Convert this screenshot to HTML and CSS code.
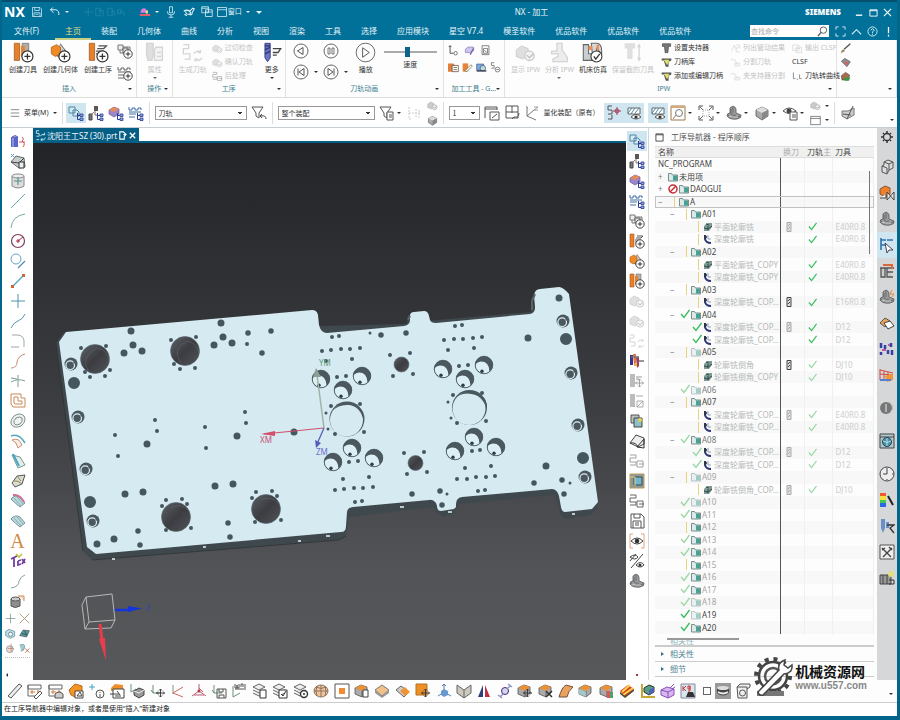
FILE: index.html
```html
<!DOCTYPE html>
<html lang="zh-CN">
<head>
<meta charset="utf-8">
<title>NX - 加工</title>
<link rel="stylesheet" href="styles.css">
</head>
<body>
<svg class="defs" aria-hidden="true">
<defs>
<symbol id="plus" viewBox="0 0 16 16"><circle cx="11" cy="11" r="4.2" fill="#fff" stroke="#333" stroke-width=".9"/><path d="M8.7 11h4.6M11 8.7v4.6" stroke="#333"/></symbol>
<symbol id="tb" viewBox="0 0 16 16"><path d="M9.5 8v6.5h2.5M9.5 10.500h2.500" stroke="#2a3c96"/><path d="M12 9h3v2.500h-3zM12 13h3v2.500h-3z" fill="#8fa2dc" stroke="#2a3c96" stroke-width=".8"/></symbol>
<symbol id="v1" viewBox="0 0 16 16"><path d="M1 2h6v6H1zM5 5h4l2 2v4H5z" fill="#d5e9f2" stroke="#4d86a3"/><use href="#tb"/></symbol>
<symbol id="v2" viewBox="0 0 16 16"><path d="M6 1h4v5H6z" fill="#5f5550"/><path d="M7 6v4h3" stroke="#8a6b5c"/><path d="M1 9h3v6H1z" fill="#777" stroke="#444"/><path d="M6 7l-3 3" stroke="#777"/><use href="#tb"/></symbol>
<symbol id="v3" viewBox="0 0 16 16"><path d="M1 5l5-3 5 2v5L6 12 1 9z" fill="#9a86c8" stroke="#6a5aa0" stroke-width=".7"/><path d="M1 5l5 2 5-3-5-2z" fill="#e88b5a"/><use href="#tb"/></symbol>
<symbol id="v4" viewBox="0 0 16 16"><path d="M1 2v3h3V3h3v2h3V3h3v2M1 9h7M1 12h6M1 7h12" stroke="#3f6fa6"/><use href="#tb"/></symbol>
<symbol id="c1" viewBox="0 0 16 16"><path d="M1 1h4v13H1z" fill="#e8802a" stroke="#a65b1e" stroke-width=".6"/><path d="M7 1h5v7H9l-2 3z" fill="#b5aca5" stroke="#777" stroke-width=".6"/><path d="M6 3h3v8H6z" fill="#e08538"/><use href="#plus"/></symbol>
<symbol id="c2" viewBox="0 0 16 16"><path d="M8 1l6 8-4 5-6-4z" fill="#777"/><path d="M8 2l3 4-3 5-3-2z" fill="#ccc"/><path d="M1 4l4-2 3 2v5L4 11 1 9z" fill="#f08a24" stroke="#b5611a" stroke-width=".6"/><use href="#plus"/></symbol>
<symbol id="c3" viewBox="0 0 16 16"><path d="M1 1h4v13H1z" fill="#e8802a" stroke="#a65b1e" stroke-width=".6"/><path d="M8 3h6l-2 2H7M6 7h6M6 9h3" stroke="#555"/><use href="#plus"/></symbol>
<symbol id="c4" viewBox="0 0 16 16"><path d="M1 2h5v5H1zM3 7v3h3M6 4h7v3" stroke="#777" fill="#eee"/><path d="M6 5h5v5H6z" fill="#ddd" stroke="#666"/><use href="#plus"/></symbol>
<symbol id="c5" viewBox="0 0 16 16"><path d="M1 2v3h3V3h3v2h3V3h3v2M1 7h13M1 10h6M1 13h6" stroke="#666"/><use href="#plus"/></symbol>
<symbol id="gtool" viewBox="0 0 16 16"><path d="M2 1h5v9l-1 4H3l-1-4z" fill="#ccc" stroke="#bbb"/><path d="M9 4h5v10H8V6zM10 8h3M10 11h3" stroke="#bbb" fill="#eee"/></symbol>
<symbol id="gstep" viewBox="0 0 16 16"><path d="M1 2h4v3H1v4h5v4H2M9 9a3 3 0 0 1 5-1M15 12a3 3 0 0 1-5 1M14 6v2h-2M10 15v-2h2" stroke="#bbb"/></symbol>
<symbol id="gcube" viewBox="0 0 16 16"><path d="M1 6l4-3 5 2v5l-4 3-5-2z" fill="#ccc" stroke="#aaa" stroke-width=".7"/><circle cx="11" cy="10.500" r="3.600" fill="#eee" stroke="#aaa"/><path d="M9 10l2 2 3-3" stroke="#999"/></symbol>
<symbol id="more" viewBox="0 0 16 16"><path d="M3 1h4v11l-2 3-2-3z" fill="#6d75c9" stroke="#333a80" stroke-width=".7"/><path d="M3 3h4M3 6l4-2M3 9l4-2" stroke="#2c3372"/><path d="M9 5h6l-2 3H9M9 10h3" stroke="#444"/></symbol>
<symbol id="eye" viewBox="0 0 16 16"><path d="M2 8q6-6 12 0-6 6-12 0z" fill="#fff" stroke="#444"/><circle cx="8" cy="8" r="2.300" fill="#333"/></symbol>
<symbol id="hatcheye" viewBox="0 0 16 16"><path d="M2 3h12v6H2z" fill="#fff" stroke="#666"/><path d="M2 8l4-5M5 9l4-6M9 8l4-5" stroke="#4f89a0"/><path d="M5 12q5-5 10 0-5 4-10 0z" fill="#fff" stroke="#333" stroke-width=".8"/><circle cx="10" cy="12" r="1.600" fill="#333"/></symbol>
<symbol id="cube" viewBox="0 0 16 16"><path d="M2 5l6-3 6 3v6l-6 4-6-4z" fill="#aaa" stroke="#555" stroke-width=".8"/><path d="M2 5l6 3 6-3-6-3z" fill="#ddd"/><path d="M8 8v7l6-4V5z" fill="#888"/></symbol>
<symbol id="ocube" viewBox="0 0 16 16"><path d="M1 5l6-3 6 2v6l-5 4-7-3z" fill="#aaa" stroke="#555" stroke-width=".8"/><path d="M1 5l7 3 5-4-6-2z" fill="#ed9135"/><path d="M8 8v6" stroke="#666"/></symbol>
<symbol id="bracket" viewBox="0 0 16 16"><path d="M4 3q4-4 6 1v4l5 2q1 3-4 4-7 1-10-3 0-3 3-3z" fill="#9b9d9e" stroke="#555" stroke-width=".8"/><path d="M2 10q5 4 12 1M5 4v5q2 2 5 1M7 2v6" stroke="#555" stroke-width=".7"/><path d="M3 11q4 2 9 1" stroke="#e5e5e5" stroke-width=".8"/></symbol>
<symbol id="funnel" viewBox="0 0 16 16"><path d="M1 2h11L8 8v5l-3-2V8z" stroke="#555" fill="#fff"/></symbol>
<symbol id="layers" viewBox="0 0 16 16"><path d="M1 4l6-3 6 3-6 3zM1 7l6 3 6-3M1 10l6 3 6-3" fill="#eee" stroke="#555" stroke-width=".9"/></symbol>
<symbol id="axis" viewBox="0 0 16 16"><path d="M3 2v8h8M3 10L1 7" stroke="#6a917a"/></symbol>
<symbol id="cross" viewBox="0 0 16 16"><path d="M10.500 6v8M6.500 10h8M9 7.500L10.500 6 12 7.500M9 12.500l1.500 1.500 1.500-1.500M8 8.500L6.500 10 8 11.500M13 8.500l1.500 1.500-1.500 1.500" stroke="#333" stroke-width=".9"/></symbol>
<symbol id="loop" viewBox="0 0 16 16"><path d="M1 2h6v3H1v4h6v3H1M8 8h6v6H8V8M10 11h5" stroke="#666"/></symbol>
<symbol id="sheet" viewBox="0 0 16 16"><path d="M1 6q4-5 9-2l5 6-5 4q-5-4-9-8z" fill="#b7dade" stroke="#71898c" stroke-width=".9"/><path d="M4 5l7 8M7 4l6 7" stroke="#7b989b" stroke-width=".7"/></symbol>
<symbol id="plate" viewBox="0 0 16 16"><path d="M1 7l7-5 7 5-7 6z" fill="#f3c08a" stroke="#777"/><path d="M1 7v3l7 5 7-5V7l-7 6z" fill="#999"/></symbol>
<symbol id="calc" viewBox="0 0 16 16"><path d="M1 2h13v4H1zM1 2v11h7" stroke="#666" fill="#fff"/><path d="M3 9h5M10 9h3M5 7v4M11 7v4" stroke="#d77a3c"/></symbol>
<symbol id="fold" viewBox="0 0 10 10"><path d="M.5 1.500h3l1 1.500h5v6h-9z" fill="#dceae8" stroke="#6a8483" stroke-width=".9"/><path d="M5 3.500h4v5H5z" fill="#49a093"/></symbol>
<symbol id="mill" viewBox="0 0 10 10"><path d="M1 4l3-3h5v4L6 9H1z" fill="#7d9b95"/><path d="M1 6l4 1 4-3M3 2l3 1M5 4v4" stroke="#36494a"/></symbol>
<symbol id="depth" viewBox="0 0 10 10"><path d="M2 1v4q1 4 6 4" stroke="#2c3677" stroke-width="2"/><path d="M5 1v4h3" stroke="#8aa0bd"/><circle cx="2.500" cy="3" r="1.500" fill="#333"/></symbol>
<symbol id="ok" viewBox="0 0 10 10"><path d="M1 5l3 3.500L9.500 1" stroke="currentColor" stroke-width="1.300"/></symbol>
<symbol id="mag" viewBox="0 0 6 10"><path d="M1 .5h4v9H1z" fill="#ddd" stroke="currentColor"/><path d="M2 4l2-2M2 7l2-2" stroke="currentColor"/></symbol>
</defs>
</svg>

<header class="top">
  <div class="title">
    <b class="nx">NX</b>
    <button aria-label="保存"><svg viewBox="0 0 16 16"><path d="M2 2h10l2 2v10H2zM5 2v4h6V2M4 14V9h8v5M6 11h4" stroke="#d8edf4"/></svg></button>
    <button aria-label="撤销"><svg viewBox="0 0 16 16"><path d="M5 2L2 5l4 4M2 5h7q5 1 4 7" stroke="#e8f5f9" stroke-width="1.300"/></svg></button><i class="dd"></i>
    <span class="ghost"><svg viewBox="0 0 58 16"><path d="M2 8h12M8 2v12M18 3h6v10h-6zM22 6h6v8M34 3h6v10h-6zM38 7h5v6M47 5h5v5h-5zM50 8h6v6" stroke="#2588aa"/></svg></span>
    <button aria-label="颜色"><svg viewBox="0 0 16 16"><path d="M2 9q0-6 5-6 3 0 4 6z" fill="#d87ce0"/><path d="M9 6h3v4H9z" fill="#eadf8c"/><path d="M1 12h14" stroke="#f15d68" stroke-width="2.500"/></svg></button><i class="dd"></i>
    <button aria-label="语音"><svg viewBox="0 0 16 16"><path d="M6 1h4v8H6zM3 7q0 5 5 5t5-5M8 12v3M5 15h6" stroke="#e8f5f9"/></svg></button>
    <button aria-label="触控"><svg viewBox="0 0 16 16"><path d="M1 7q4-3 8 0 3 4-2 4-4 0-3-4M8 8l5-5 2 1-3 5q1 3-3 3M2 11l3 2" stroke="#e8f5f9" stroke-width="1.400"/></svg></button>
    <button aria-label="切换窗口"><svg viewBox="0 0 16 16"><path d="M1 1h9v8H1zM6 5h9v9H6zM1 3h9M6 8h9" stroke="#e8f5f9"/></svg></button>
    <button class="win"><svg viewBox="0 0 16 16"><path d="M2 2h12v12H2zM2 5h12" stroke="#e8f5f9"/></svg>窗口</button><i class="dd"></i><i class="dd wide"></i>
    <h1>NX - 加工</h1>
    <b class="siemens">SIEMENS</b>
    <div class="wctl"><button aria-label="最小化"><svg viewBox="0 0 10 10"><path d="M1 8h7" stroke="#fff" stroke-width="1.500"/></svg></button><button aria-label="最大化"><svg viewBox="0 0 10 10"><path d="M1 2h8v7H1zM1 3h8" stroke="#fff"/></svg></button><button aria-label="关闭"><svg viewBox="0 0 10 10"><path d="M1 1l8 8M9 1L1 9" stroke="#fff" stroke-width="1.200"/></svg></button></div>
  </div>
  <nav class="menu">
    <a href="#" class="file">文件(F)</a><a href="#" class="on">主页</a><a href="#">装配</a><a href="#">几何体</a><a href="#">曲线</a><a href="#">分析</a><a href="#">视图</a><a href="#">渲染</a><a href="#">工具</a><a href="#">选择</a><a href="#">应用模块</a><a href="#">星空 V7.4</a><a href="#">模圣软件</a><a href="#">优品软件</a><a href="#">优品软件</a><a href="#">优品软件</a>
    <div class="find"><input type="text" placeholder="查找命令" aria-label="查找命令"><svg viewBox="0 0 12 12"><circle cx="7" cy="4.500" r="3.500" stroke="#555"/><path d="M4.500 7L1 11" stroke="#555" stroke-width="1.500"/></svg></div>
    <div class="mctl"><button aria-label="全屏"><svg viewBox="0 0 12 12"><path d="M1 4V1h3M8 1h3v3M11 8v3H8M4 11H1V8" stroke="#d8edf4"/></svg></button><button aria-label="折叠"><svg viewBox="0 0 12 12"><path d="M1 9l5-5 5 5" stroke="#d8edf4" stroke-width="1.200"/></svg></button><button aria-label="帮助"><svg viewBox="0 0 12 12"><circle cx="6" cy="6" r="5" stroke="#d8edf4"/><path d="M4 4.500q2-3 4 0L6 6.500V8M6 9v1" stroke="#d8edf4"/></svg></button><button aria-label="提示"><svg viewBox="0 0 12 12"><path d="M6 1v7M6 9.500v2" stroke="#fff" stroke-width="1.400"/></svg></button></div>
  </nav>
</header>

<section class="ribbon">
  <div class="grp g1"><div class="body">
    <button class="big"><svg><use href="#c1"/></svg>创建刀具</button>
    <button class="big"><svg><use href="#c2"/></svg>创建几何体</button>
    <button class="big"><svg><use href="#c3"/></svg>创建工序</button>
    <div class="pair"><button aria-label="创建程序"><svg><use href="#c4"/></svg></button><button aria-label="创建方法"><svg><use href="#c5"/></svg></button></div>
  </div><div class="cap">插入<i class="dd"></i></div></div>
  <div class="grp g2"><div class="body"><button class="big off"><svg><use href="#gtool"/></svg>属性<i class="dd"></i></button></div><div class="cap">操作<i class="dd"></i></div></div>
  <div class="grp g3"><div class="body">
    <button class="big off"><svg><use href="#gstep"/></svg>生成刀轨</button>
    <div class="list off"><button><svg><use href="#gcube"/></svg>过切检查</button><button><svg><use href="#gcube"/></svg>确认刀轨</button><button><svg><use href="#loop"/></svg>后处理</button></div>
    <button class="big"><svg><use href="#more"/></svg>更多<i class="dd"></i></button>
  </div><div class="cap">工序<i class="dd"></i></div></div>
  <div class="grp g4"><div class="body">
    <div class="play"><button aria-label="倒放"><svg viewBox="0 0 16 16"><circle cx="8" cy="8" r="7" stroke="#666"/><path d="M10 4.500v7L4.500 8z" stroke="#555"/></svg></button><i></i><button aria-label="暂停"><svg viewBox="0 0 16 16"><circle cx="8" cy="8" r="7" stroke="#666"/><path d="M5 5h2v6H5zM9 5h2v6H9z" stroke="#555" stroke-width=".8"/></svg></button><i></i>
    <button aria-label="首步"><svg viewBox="0 0 16 16"><circle cx="8" cy="8" r="7" stroke="#666"/><path d="M11 4.500v7L6 8zM5 4.500v7" stroke="#555"/></svg></button><i class="dd"></i><button aria-label="末步"><svg viewBox="0 0 16 16"><circle cx="8" cy="8" r="7" stroke="#666"/><path d="M5 4.500v7L10 8zM11 4.500v7" stroke="#555"/></svg></button><i class="dd"></i></div>
    <button class="big"><svg viewBox="0 0 22 22"><circle cx="11" cy="11" r="9.800" stroke="#666"/><path d="M8 6v10l7-5z" stroke="#555"/></svg>播放</button>
    <label class="speed"><input type="range" min="0" max="100" value="45"><span>速度</span></label>
  </div><div class="cap">刀轨动画<i class="dd"></i></div></div>
  <div class="grp g5"><div class="body tools">
    <div><button aria-label="坐标"><svg viewBox="0 0 16 16"><path d="M3 1v11h5M1 3l2-2 2 2" stroke="#444" stroke-width="1.300"/><circle cx="11" cy="12" r="2.500" stroke="#444"/></svg></button><button aria-label="刀轨"><svg viewBox="0 0 16 16"><path d="M2 6l4-3h8v5l-6 3H2z" fill="#cfc6ef" stroke="#8a7ab5"/><path d="M9 14l5-9" stroke="#7a66b0" stroke-width="2"/></svg></button><button aria-label="复制"><svg viewBox="0 0 16 16"><path d="M3 1h10v13H3zM5 5h6v7H5zM6 7l4 4" stroke="#555"/></svg></button></div>
    <div><button aria-label="模板"><svg viewBox="0 0 16 16"><path d="M0 2h8l2 3v9H0z" fill="#df803e"/><path d="M6 5h9v9H6zM8 8h5M8 11h5" fill="#fff" stroke="#5a4030"/></svg></button><button aria-label="编辑"><svg viewBox="0 0 16 16"><path d="M1 2h8v12H1z" fill="#e8833b"/><path d="M4 13l9-9 2 2-8 8z" fill="#fff" stroke="#664"/></svg></button><button aria-label="分析"><svg viewBox="0 0 16 16"><path d="M1 3h10v9H1z" fill="#7fa7e0" stroke="#3c5a8c"/><circle cx="10" cy="9" r="4" fill="#bdd" stroke="#456"/><path d="M1 13h14" stroke="#3a3a4a" stroke-width="2"/></svg></button><button aria-label="参数"><svg viewBox="0 0 16 16"><path d="M6 1H2v4h4v4H2" stroke="#555"/><circle cx="11" cy="11" r="3.500" stroke="#555"/><path d="M9 11h4" stroke="#555"/></svg></button></div>
  </div><div class="cap">加工工具 - G...<i class="dd"></i></div></div>
  <div class="grp g6"><div class="body">
    <button class="big off"><svg><use href="#gcube"/></svg>显示 IPW</button>
    <button class="big off"><svg viewBox="0 0 16 16"><path d="M6 1h4v5l4 6v3H3v-2l4-2V9H2V7h4z" fill="#e4e4e4" stroke="#bbb"/></svg>分析 IPW<i class="dd"></i></button>
    <button class="big"><svg viewBox="0 0 16 16"><path d="M1 14V2h4v7h4v5z" fill="#c9ced0" stroke="#666" stroke-width=".8"/><path d="M7 1h5q3 1 3 6V9l-4-4v5H8z" fill="#d4dadc" stroke="#666" stroke-width=".8"/><path d="M5 3h3v3H5zM11 2h2v4h-2z" fill="#ea8e5e"/><circle cx="11" cy="11" r="4.200" fill="#fff" stroke="#333" stroke-width=".8"/><path d="M9 11l1.500 2L13.500 9" stroke="#333"/></svg>机床仿真</button>
    <button class="big off"><svg viewBox="0 0 16 16"><path d="M2 1h8v4H8v8H4V5H2z" fill="#ccc"/><path d="M13 3v10M12 4l1-2 1 2M12 12l1 2 1-2" stroke="#bbb"/></svg>保留截的刀具</button>
    <div class="list"><button><svg viewBox="0 0 16 16"><path d="M2 1h12v4h-3l-1 9H6L5 5H2z" fill="#777" stroke="#333" stroke-width=".8"/></svg>设置夹持器</button><button><svg viewBox="0 0 16 16"><path d="M1 2h14v3l-4 2v7H7L4 5H1z" fill="#555"/><path d="M4 4h8l-3 8z" fill="#e2df6c"/></svg>刀柄库</button><button><svg viewBox="0 0 16 16"><path d="M1 2h14v3l-4 2v7H7L4 5H1z" fill="#555"/><path d="M4 4h8l-3 8z" fill="#e2df6c"/></svg>添加或编辑刀柄</button></div>
    <div class="list off"><button><svg viewBox="0 0 16 16"><path d="M2 12L6 3l3 6M9 3h5v4H9v6h5" stroke="#bbb"/></svg>列出管动结果</button><button><svg viewBox="0 0 16 16"><path d="M1 4h6l4 8M7 9h7v4H7z" stroke="#bbb"/></svg>分割刀轨</button><button><svg viewBox="0 0 16 16"><path d="M1 4h6l4 8M7 9h7v4H7z" stroke="#bbb"/></svg>夹夹持器分割</button></div>
    <div class="list"><button class="off"><svg viewBox="0 0 16 16"><path d="M1 3h9v8H1zM6 6h8v8H6zM4 8h8" stroke="#bbb"/></svg>输出 CLSF</button><button>CLSF</button><button><svg viewBox="0 0 16 16"><path d="M2 2v9h3M7 12h2M11 5v6h3" stroke="#567"/></svg>刀轨转曲线</button></div>
  </div><div class="cap">IPW<i class="dd"></i></div></div>
  <div class="grp g7"><div class="body"><div class="list"><button aria-label="画笔"><svg viewBox="0 0 16 16"><path d="M6 9L15 1" stroke="#555" stroke-width="2"/><path d="M1 15l2-5 3-1 1 3z" fill="#9b845a"/></svg></button><button aria-label="喷涂"><svg viewBox="0 0 16 16"><path d="M2 6l5-4 8 5-5 7z" fill="#8d8f90" stroke="#555"/><path d="M7 7h5v4H7z" fill="#c66"/></svg></button><button aria-label="着色"><svg viewBox="0 0 16 16"><path d="M2 7l6-5 6 4-3 7H3z" fill="#ad6a4d" stroke="#544"/><path d="M6 9h9l-2 5H7z" fill="#3d9a44"/></svg></button></div></div><div class="cap"><i class="dd"></i></div></div>
</section>

<section class="selbar">
  <button class="mn"><svg viewBox="0 0 12 12"><path d="M1 2h10M1 6h10M1 10h10" stroke="#777"/></svg>菜单(M)<i class="dd"></i></button><hr>
  <button class="sel" aria-label="程序顺序视图"><svg><use href="#v1"/></svg></button><button aria-label="机床视图"><svg><use href="#v2"/></svg></button><button aria-label="几何视图"><svg><use href="#v3"/></svg></button><button aria-label="加工方法视图"><svg><use href="#v4"/></svg></button><hr>
  <select class="s1" aria-label="类型过滤器"><option>刀轨</option></select>
  <button aria-label="过滤"><svg viewBox="0 0 16 16"><use href="#funnel"/><path d="M15 14q0-4-5-3M11 9l-2 2 2 2" stroke="#444"/></svg></button><hr>
  <select class="s2" aria-label="选择范围"><option>整个装配</option></select>
  <button aria-label="过滤列表"><svg viewBox="0 0 16 16"><use href="#funnel"/><path d="M8 7h6v8H8zM10 10h3M10 12h3" fill="#fff" stroke="#555"/></svg></button><i class="dd"></i>
  <button aria-label="捕捉"><svg viewBox="0 0 16 16"><path d="M2 2v12h3M2 8h12M9 4v8M12 5v8" stroke="#ccc" stroke-dasharray="2 1"/></svg></button>
  <div class="stack"><svg viewBox="0 0 16 16"><use href="#gcube"/></svg><svg viewBox="0 0 16 16"><use href="#cube"/></svg></div><hr>
  <select class="s3" aria-label="层"><option>1</option></select>
  <button aria-label="图层"><svg viewBox="0 0 16 16"><path d="M1 13V2h12v3M1 4h12M6 7h9v8H6zM8 13l5-4" stroke="#555"/></svg></button><button aria-label="移动层"><svg viewBox="0 0 16 16"><path d="M2 1h12v12H2zM2 7h12M8 1v7M10 12q5 1 5-4M8 14l2-2" stroke="#555"/></svg></button><button aria-label="坐标系"><svg viewBox="0 0 16 16"><path d="M3 2v9l9 4M3 11l7-6" stroke="#777"/><path d="M10 2h4l-4 3h4M2 1l2 2" stroke="#777" stroke-width=".7"/></svg></button>
  <span class="txt">量化装配（原有）</span>
  <button class="sel" aria-label="点"><svg viewBox="0 0 16 16"><path d="M6 1H2v4h4v4H2M2 14h4v-4" stroke="#555"/><path d="M11 2v8M7 6h8" stroke="#a63d58"/><circle cx="11" cy="6" r="2" stroke="#a63d58"/></svg></button><button class="sel" aria-label="显示"><svg><use href="#hatcheye"/></svg></button><button class="sel lone" aria-label="剖面"><svg><use href="#hatcheye"/></svg></button>
  <button aria-label="适合窗口"><svg viewBox="0 0 16 16"><path d="M1 1h14v14H1z" stroke="#9a7a4c"/><path d="M1 1h14v2H1z" fill="#d8a878"/><circle cx="9" cy="8" r="3.500" stroke="#777"/><path d="M6 10l-3 4" stroke="#a75"/></svg></button><i class="dd"></i>
  <button aria-label="缩放"><svg viewBox="0 0 16 16"><path d="M1 5V1h4M11 1h4v4M15 11v4h-4M5 15H1v-4" stroke="#555"/><path d="M5 5h6v6H5z" stroke="#aaa" stroke-dasharray="1 1"/><path d="M2 2l3 3M14 2l-3 3M14 14l-3-3M2 14l3-3" stroke="#666"/></svg></button><i class="dd"></i>
  <button aria-label="方位"><svg><use href="#bracket"/></svg></button><i class="dd"></i><button aria-label="渲染样式"><svg><use href="#cube"/></svg></button><i class="dd"></i><button aria-label="显示和隐藏"><svg viewBox="0 0 16 16"><path d="M1 6q6-6 13 0-6 5-13 0z" stroke="#555"/><circle cx="7" cy="6" r="2.500" fill="#444"/><path d="M8 7h7v8H8zM10 10h4M10 12h4" fill="#fff" stroke="#555"/></svg></button><i class="dd"></i>
  <div class="stack"><svg viewBox="0 0 16 16"><use href="#gcube"/></svg><svg viewBox="0 0 16 16"><path d="M1 2h14v12H1zM1 5h14" stroke="#555"/></svg></div><div class="stack"><i class="dd"></i><i class="dd"></i></div><hr>
  <button aria-label="草图"><svg viewBox="0 0 16 16"><path d="M2 6h6l6-3v7l-7 4-5-3z" fill="#ccc" stroke="#777"/><path d="M7 14l6-13M3 9l8 1" stroke="#555"/></svg></button><i class="dd end"></i>
</section>

<main class="work">
  <aside class="tools-left">
    <button aria-label="移动"><svg viewBox="0 0 16 16"><path d="M1 4h7v10H1z" fill="#5a67c8"/><path d="M2 4q3-3 6 0" fill="#aab" stroke="#66a"/><path d="M3 5v9" stroke="#b9c2f2"/><path d="M9 9h6M12 4q3 2 0 4 4 2 1 6" stroke="#cc5560"/></svg></button>
    <button aria-label="面"><svg viewBox="0 0 16 16"><path d="M1 9l5-6 8 2 1 9-6 1z" fill="#c6cdd0" stroke="#666"/><path d="M1 9l8 1 5-5" stroke="#444"/><path d="M9 9h5v6H9z" stroke="#333" fill="#eee"/><path d="M1 1l3 3M4 1L1 4" stroke="#4aa3c0"/></svg></button>
    <button aria-label="圆柱"><svg viewBox="0 0 16 16"><path d="M2 3v10q6 4 12 0V3" fill="#ddd" stroke="#888"/><ellipse cx="8" cy="3" rx="6" ry="2" fill="#eee" stroke="#888"/><path d="M8 4v8M4 8h8" stroke="#4a8f84"/></svg></button>
    <button aria-label="直线"><svg viewBox="0 0 16 16"><path d="M1 15L15 1" stroke="#6aa6b5"/></svg></button>
    <button aria-label="圆弧"><svg viewBox="0 0 16 16"><path d="M1 15Q2 3 15 1" stroke="#7aa9a5"/></svg></button>
    <button aria-label="圆"><svg viewBox="0 0 16 16"><circle cx="8" cy="8" r="6.500" stroke="#7d3e5c" stroke-width="1.200"/><path d="M8 8l5-4M8 6v4M6 8h4" stroke="#a82f47"/></svg></button>
    <button aria-label="相切"><svg viewBox="0 0 16 16"><circle cx="6" cy="6" r="5" stroke="#62a5c0"/><path d="M8 15l7-7" stroke="#4e8fae" stroke-width="1.300"/></svg></button>
    <button aria-label="线段"><svg viewBox="0 0 16 16"><path d="M2 14L14 2" stroke="#45a4bf" stroke-width="1.200"/><path d="M1 12h3v3H1zM12 1h3v3h-3z" fill="#c9693c"/></svg></button>
    <button aria-label="点"><svg viewBox="0 0 16 16"><path d="M8 1v14M1 8h14" stroke="#4e93a8"/></svg></button>
    <button aria-label="样条"><svg viewBox="0 0 16 16"><path d="M1 15q3-6 7-7 5-2 7-7" stroke="#5694ae"/></svg></button>
    <button aria-label="圆角"><svg viewBox="0 0 16 16"><path d="M2 2h6q6 1 6 6v6M1 14h8" stroke="#9aa"/></svg></button>
    <button aria-label="桥接"><svg viewBox="0 0 16 16"><path d="M1 15q6 0 6-6 1-6 8-8" stroke="#c48e75"/></svg></button>
    <button aria-label="修剪"><svg viewBox="0 0 16 16"><path d="M1 9q7-4 14-1M8 2v12M1 5l6 1" stroke="#7e9d98"/></svg></button>
    <button aria-label="偏置"><svg viewBox="0 0 16 16"><path d="M1 1h10v4h4v9H3l-2-3zM4 4h4v4h4v3H5L4 10z" stroke="#c78858"/></svg></button>
    <button aria-label="轮廓"><svg viewBox="0 0 16 16"><path d="M4 3q6-4 10 0 3 5-3 10-7 3-10-2-1-4 3-8zM6 5q4-2 6 0 1 4-2 6-5 2-6-1-1-2 2-5z" fill="#eef3f1" stroke="#7f8e87"/></svg></button>
    <button aria-label="投影"><svg viewBox="0 0 16 16"><path d="M1 3q8-3 14 7" stroke="#54a7c1" stroke-width="1.500"/><path d="M2 7q7-3 10 5l-4 3Q7 9 2 7z" fill="#f8eee6" stroke="#c78f72"/></svg></button>
    <button aria-label="抽取"><svg viewBox="0 0 16 16"><path d="M2 2l8 2 5 8-7 3z" fill="#e7eee8" stroke="#799"/><path d="M3 1l6 12" stroke="#43a5c0" stroke-width="2"/></svg></button>
    <button aria-label="曲面"><svg viewBox="0 0 16 16"><path d="M2 10l5-7 8-1-3 9-7 3z" fill="#d8ddd4" stroke="#555"/><path d="M4 8q4-1 8 3M7 3l4 5" stroke="#9a8650"/></svg></button>
    <button aria-label="扫掠"><svg viewBox="0 0 16 16"><use href="#sheet"/><path d="M3 2q7-1 11 7" stroke="#d06f93" stroke-width="2"/></svg></button>
    <button aria-label="片体"><svg><use href="#sheet"/></svg></button>
    <button class="serif">A</button>
    <button aria-label="文本"><svg viewBox="0 0 16 16"><path d="M1 6l6-3M4 5v9M8 8l3-1M8 8v4l3-1M12 6l3 4M15 6l-3 5" stroke="#7340a0" stroke-width="1.800"/><path d="M6 1l3 3 3-3" stroke="#b9be30" stroke-width="1.500"/></svg></button>
    <button aria-label="曲线"><svg viewBox="0 0 16 16"><path d="M1 15q8-1 8-7 2-5 6-6" stroke="#82a7a3"/></svg></button>
    <button aria-label="实体"><svg viewBox="0 0 16 16"><path d="M1 6v7q4 3 9 0V6z" fill="#8d8f8e" stroke="#555"/><ellipse cx="5.500" cy="6" rx="4.500" ry="2" fill="#ccc" stroke="#555"/><path d="M8 3h6v5" fill="#f5dfce" stroke="#d08a5e"/></svg></button>
    <div class="mini"><svg viewBox="0 0 16 16"><path d="M8 1v14M1 8h14" stroke="#6a8f88"/></svg><svg viewBox="0 0 16 16"><path d="M1 1l14 14M15 1L1 15" stroke="#a58a68" stroke-width="1.200"/></svg><svg viewBox="0 0 16 16"><path d="M1 5l5-3 8 3v7l-6 3-7-4z" fill="#bfe0e8" stroke="#467e8c"/><circle cx="8" cy="9" r="3" fill="#fff" stroke="#467"/></svg><svg viewBox="0 0 16 16"><path d="M1 11l5-8 9 1-4 9z" fill="#5a9aa2" stroke="#3b4f53"/><path d="M4 8l8 2M8 4l3 6" stroke="#244"/></svg><svg viewBox="0 0 16 16"><circle cx="7" cy="9" r="5" fill="#ddd" stroke="#888"/><path d="M9 1v12M4 8h9" stroke="#c77a62"/></svg><svg viewBox="0 0 16 16"><path d="M1 3q8-3 7 3 0 5-5 6" fill="#a7cad1" stroke="#5b8f9b"/><path d="M9 8l6 6M15 8l-6 6" stroke="#c7604b" stroke-width="1.300"/></svg></div>
    <i class="back"></i>
  </aside>

  <section class="view">
    <div class="tabs"><button class="doc"><svg viewBox="0 0 16 16"><path d="M6 1H2v4h4v4H2M2 14h4M8 9a4 4 0 0 1 6-2M15 11a4 4 0 0 1-6 3M14 4v3h-3M9 16v-3h3" stroke="#cfe5ee" stroke-width="1.300"/></svg>沈阳王工SZ (30).prt<svg viewBox="0 0 10 10"><path d="M2 1h4l3 3-2 2v3H2zM6 4h3" stroke="#fff" stroke-width="1.200"/></svg><svg viewBox="0 0 10 10"><path d="M2 2l6 6M8 2L2 8" stroke="#fff" stroke-width="1.500"/></svg></button></div>
    <svg class="scene" viewBox="34 143 593 537" preserveAspectRatio="xMidYMid slice">
      <defs>
        <linearGradient id="bgscene" gradientUnits="userSpaceOnUse" x1="0" y1="143" x2="0" y2="680"><stop offset="0" stop-color="#232427"/><stop offset=".45" stop-color="#3a3b3f"/><stop offset=".8" stop-color="#535457"/><stop offset="1" stop-color="#57585a"/></linearGradient>
        <linearGradient id="hole" x1="0" y1="0" x2="1" y2="1"><stop offset="0" stop-color="#5c6166"/><stop offset=".5" stop-color="#3c3c41"/><stop offset="1" stop-color="#505458"/></linearGradient>
        <g id="bore"><circle r="9" fill="#4b595f"/><path d="M-8.300-1A8.400 8.400 0 0 0 5.500 6.400Q5-3.500-3-3.500-6-3.500-8.300-1z" fill="#dceff5"/><circle r="8.800" stroke="#43525a" stroke-width=".7"/><circle cx="-2" cy="6.300" r="1.700" fill="#2d3a40"/></g>
        <g id="ring"><circle r="6.500" fill="#4b595f"/><circle cx="-.8" cy="1.200" r="4.300" fill="#4b595f" stroke="#dceff5" stroke-width="1.200"/><path d="M2-2l3-3 1 4-2 1z" fill="#4b595f"/></g>
      </defs>
      <path d="M-400-300H1400V1200H-400z" fill="url(#bgscene)"/>
      <path d="M65 332L57 343 84 551 93 560 340 540 347 536 350 517 434 507 438 513 445 517 454 514 459 504 556 495 562 515 566 519 592 515 598 508 590 480 533 300 532 312 415 322 409 314 408 324z" fill="#3f494d"/>
      <path d="M93 560L340 540 347 536M84 551L57 343" stroke="#2c3033" stroke-width=".7"/>
      <path d="M67 332L313 310Q318 310 319 315L320 325Q322 333 328 333L405 326Q411 325 411 320V316Q411 312 415 312L425 311Q429 311 430 316L431 320Q432 323 437 323L531 314Q536 313 536 308L535 295Q536 289 541 289L560 287Q564 287 570 294L599 502 593 509 566 512Q563 512 562 507L560 496Q558 489 553 489L463 497Q457 498 457 504V507L455 509 442 511Q438 511 438 506L437 503Q434 499 430 500L354 507Q348 508 348 512L347 526Q347 532 342 532L97 554 88 547 60 342Z" fill="#d6eaf2"/>
      <path d="M411 316l-2 4M536 294l-3 7v9" stroke="#59656a" stroke-width="2"/>
      <path d="M113 559h3M204 547h3M299 541h3M327 536h4M401 507h4M449 512h4M573 514h3" stroke="#e5f3f8" stroke-width="1.500"/>
      <g fill="url(#hole)" stroke="#5a6b73" stroke-width=".6"><circle cx="96" cy="359" r="14.500"/><circle cx="186" cy="351" r="14.500"/><circle cx="177" cy="517" r="14.500"/><circle cx="267" cy="509" r="14.500"/><circle cx="402.500" cy="364.500" r="7.500"/><circle cx="416.500" cy="463" r="7.500"/></g>
      <path d="M90 372q-10-15 8-24 12 2 12 15M182 363q-10-14 6-22 10 2 12 12M172 508q10-6 18 3M262 500q10-5 18 4" stroke="#606468" stroke-width=".6"/>
      <g fill="#4b595f"><circle cx="348" cy="419" r="17.500"/><circle cx="470.500" cy="407.500" r="17.500"/></g>
      <g fill="#d6eaf2"><circle cx="347.500" cy="420" r="16.500"/><circle cx="470" cy="408.500" r="16.500"/></g>
      <path d="M333 411Q347 394 363 411 365 415 365 421 361 406 350 405 340 404 333 411zM455 400Q470 383 486 399 488 403 488 409 483 395 472 394 462 392 455 400z" fill="#4b595f"/>
      <use href="#bore" x="322" y="379"/><use href="#bore" x="344" y="390"/><use href="#bore" x="363" y="376"/><use href="#bore" x="353" y="448"/><use href="#bore" x="334" y="462"/><use href="#bore" x="375" y="458"/><use href="#bore" x="444" y="369"/><use href="#bore" x="466" y="379"/><use href="#bore" x="485" y="365"/><use href="#bore" x="475" y="437"/><use href="#bore" x="456" y="451"/><use href="#bore" x="497" y="447"/>
      <use href="#ring" x="72" y="364"/><use href="#ring" x="79" y="417"/><use href="#ring" x="87" y="469"/><use href="#ring" x="94" y="521"/><use href="#ring" x="564" y="321"/><use href="#ring" x="572" y="373"/><use href="#ring" x="579" y="425"/><use href="#ring" x="586" y="477"/>
      <g class="dots"><path stroke-width="12" d="M75 383h0M91 502h0M567 339h0M584 458h0"/>
      <path stroke-width="7" d="M132 331h0M134 345h0M125 353h0M143 351h0M560 298h0M529 338h0M547 466h0M222 323h0M224 337h0M215 345h0M233 343h0M295 432h0M216 486h0M234 484h0M148 444h0M126 494h0M144 492h0M115 539h0M98 544h0M238 436h0"/>
      <path stroke-width="5.500" d="M249 333h0M272 331h0M263 353h0M229 523h0M231 537h0M139 531h0M141 545h0M535 483h0M563 480h0M565 494h0M382 335h0M407 333h0M413 494h0M441 491h0M443 505h0"/>
      <path stroke-width="4" d="M333 337h0M340 336h0M323 351h0M332 350h0M342 349h0M351 349h0M361 348h0M353 359h0M327 361h0M391 355h0M411 353h0M394 376h0M414 374h0M338 377h0M347 376h0M332 406h0M361 404h0M336 434h0M365 432h0M350 462h0M359 461h0M344 479h0M370 477h0M336 490h0M345 489h0M355 488h0M364 488h0M374 487h0M356 502h0M363 501h0M405 453h0M425 452h0M408 474h0M428 472h0M456 326h0M463 325h0M445 340h0M455 339h0M464 339h0M474 338h0M483 337h0M449 350h0M475 348h0M460 366h0M469 365h0M454 395h0M483 393h0M458 423h0M487 421h0M473 451h0M481 450h0M466 468h0M492 466h0M458 479h0M468 479h0M477 477h0M487 477h0M496 476h0M479 491h0M486 490h0M82 348h0M107 346h0M86 372h0M111 370h0M91 377h0M106 376h0M172 340h0M197 337h0M175 364h0M181 369h0M196 368h0M163 506h0M167 500h0M183 499h0M188 504h0M167 530h0M192 528h0M253 498h0M257 492h0M273 491h0M278 496h0M256 522h0M282 520h0M156 420h0M158 431h0M116 435h0M119 456h0M248 344h0M246 412h0M247 423h0M206 427h0M207 448h0"/>
      <path stroke-width="3" d="M327 413h0M329 429h0M371 333h0M449 402h0M452 418h0M448 494h0M571 483h0"/></g>
      <path d="M325 428L265 434" stroke="#d2506a" stroke-width="1.200"/><path d="M262 434l14-3v5z" fill="#d2506a"/>
      <path d="M325 428L318 375" stroke="#a3b3a8" stroke-width="1.500"/><path d="M317 368l-3 9h8z" fill="#8ea095"/>
      <path d="M325 428L318 444" stroke="#535fb8" stroke-width="1.200"/><path d="M317 448l-1-8 6 3z" fill="#535fb8"/>
      <text x="261" y="443" fill="#c65373">XM</text><text x="320" y="366" fill="#5c9977">YM</text><text x="317" y="455" fill="#6a70cf">ZM</text>
      <path d="M87 597L113 594 116 620 90 622zM87 597L83 605 86 629 90 622M86 629L112 628 116 620" stroke="#c1c2c3" stroke-width=".9"/>
      <path d="M116 610h15" stroke="#1434de" stroke-width="2.500"/><path d="M129 606l14 2.500-14 3.500z" fill="#1434de"/><text x="147" y="611" fill="#3848a8">X</text>
      <path d="M101 624l2 16" stroke="#e93c4c" stroke-width="3"/><path d="M100 639l6-1 1 23z" fill="#e93c4c"/>
    </svg>
  </section>

  <aside class="tools-right">
    <button class="sel" aria-label="程序顺序"><svg><use href="#v1"/></svg></button><button aria-label="机床"><svg><use href="#v2"/></svg></button><button aria-label="几何"><svg><use href="#v3"/></svg></button><button aria-label="方法"><svg><use href="#v4"/></svg></button>
    <button aria-label="创建程序"><svg><use href="#c4"/></svg></button><button aria-label="创建工序"><svg><use href="#c3"/></svg></button><button aria-label="创建几何体"><svg><use href="#c2"/></svg></button><button aria-label="创建刀具"><svg><use href="#c1"/></svg></button>
    <button class="off" aria-label="确认"><svg><use href="#gcube"/></svg></button><button class="off" aria-label="检查"><svg><use href="#gcube"/></svg></button><button class="off" aria-label="生成"><svg><use href="#gstep"/></svg></button>
    <button aria-label="后处理"><svg viewBox="0 0 16 16"><path d="M1 2h3v10H1z" fill="#39308f"/><path d="M4 1h3v9l-2 2z" fill="#e3743a"/><path d="M7 4h3v9l-2 2z" fill="#9c4060"/><path d="M10 8h5M2 4h8" stroke="#777" stroke-width="1.500"/><path d="M5 12h3" stroke="#e3b23a" stroke-width="2"/></svg></button>
    <button aria-label="刀具列表"><svg viewBox="0 0 16 16"><path d="M1 1h5v13H1z" fill="#bbb"/><path d="M7 4h6M7 6h3" stroke="#999"/><use href="#cross" opacity=".5"/></svg></button>
    <button aria-label="刀具清单"><svg viewBox="0 0 16 16"><path d="M1 1h5v13H1z" fill="#bbb"/><path d="M7 3h7M8 8h6v6H8zM8 14l6-6" stroke="#aaa"/></svg></button>
    <button aria-label="同步"><svg viewBox="0 0 16 16"><path d="M2 2h8v8H2z" fill="#b9c2bc" stroke="#555"/><path d="M5 5h8v9H5z" fill="#8fc0c8" stroke="#444"/><circle cx="11" cy="7" r="2" fill="#e5cf57"/></svg></button>
    <button aria-label="测量"><svg viewBox="0 0 16 16"><path d="M1 10l6-8 8 3v6l-6 3z" fill="#eee" stroke="#444"/><path d="M1 10q6-1 8 4M8 14l7-8v9z" stroke="#333"/></svg></button>
    <button class="off" aria-label="刀轨"><svg><use href="#loop"/></svg></button>
    <button aria-label="显示"><svg viewBox="0 0 16 16"><path d="M1 1h14v14H1z" fill="#8a9a9c" stroke="#bd9a55"/><path d="M5 4h8v8H5z" fill="#6eb6ce" stroke="#445"/><path d="M1 4h5v9" stroke="#ecd16f"/></svg></button>
    <button aria-label="输出"><svg><use href="#loop"/></svg></button>
    <button aria-label="保存"><svg viewBox="0 0 16 16"><path d="M2 1h10l3 3v11H2zM5 1v4h6V1M4 15V8h8v7M6 10h4M6 12h4" stroke="#555"/></svg></button>
    <button aria-label="显示对象"><svg viewBox="0 0 16 16"><path d="M4 1H1v14h3M12 1h3v14h-3" stroke="#e4a17c"/><use href="#eye"/></svg></button>
    <button aria-label="隐藏"><svg viewBox="0 0 16 16"><path d="M1 4q5-4 8 0-3 4-8 0zM7 12q5-5 8 0-4 4-8 0zM2 15L14 1M1 8l6-7" stroke="#444"/><circle cx="11" cy="12" r="1.500" fill="#333"/></svg></button>
    <button aria-label="部件"><svg><use href="#bracket"/></svg></button>
    <i class="dot"></i>
  </aside>

  <section class="nav">
    <header><svg viewBox="0 0 10 10"><path d="M1 1h8v8H1zM1 2h8" stroke="#444"/></svg>工序导航器 - 程序顺序</header>
    <div class="tree">
    <table>
      <colgroup><col class="cn"><col class="ct"><col class="cp"><col class="cd"></colgroup>
      <thead><tr><th>名称</th><th class="lt">换刀</th><th>刀轨<em>主</em></th><th>刀具</th></tr></thead>
      <tbody>
      <tr><td><span class="r">NC_PROGRAM</span></td><td></td><td></td><td></td></tr>
      <tr><td><span class="r"><i class="e">+</i><svg><use href="#fold"/></svg>未用项</span></td><td></td><td></td><td></td></tr>
      <tr><td><span class="r"><i class="e">+</i><i class="s"><svg viewBox="0 0 10 10"><circle cx="5" cy="5" r="4" stroke="#c92a35" stroke-width="1.500"/><path d="M2 8l6-6" stroke="#c92a35" stroke-width="1.500"/></svg></i><svg><use href="#fold"/></svg>DAOGUI</span></td><td></td><td></td><td></td></tr>
      <tr class="cur"><td><span class="r"><i class="e">−</i><i class="s y"></i><svg><use href="#fold"/></svg>A</span></td><td></td><td></td><td></td></tr>
      <tr><td><span class="r l2"><i class="e">−</i><i class="s y"></i><svg><use href="#fold"/></svg>A01</span></td><td></td><td></td><td></td></tr>
      <tr class="op"><td><span class="r l3"><i class="s y"></i><svg><use href="#mill"/></svg>平面轮廓铣</span></td><td><svg class="m"><use href="#mag"/></svg></td><td><svg class="k"><use href="#ok"/></svg></td><td>E40R0.8</td></tr>
      <tr class="op"><td><span class="r l3"><i class="s y"></i><svg><use href="#depth"/></svg>深度轮廓铣</span></td><td></td><td><svg class="k"><use href="#ok"/></svg></td><td>E40R0.8</td></tr>
      <tr><td><span class="r l2"><i class="e">−</i><i class="s y"></i><svg><use href="#fold"/></svg>A02</span></td><td></td><td></td><td></td></tr>
      <tr class="op"><td><span class="r l3"><i class="s y"></i><svg><use href="#mill"/></svg>平面轮廓铣_COPY</span></td><td></td><td><svg class="k"><use href="#ok"/></svg></td><td>E40R0.8</td></tr>
      <tr class="op"><td><span class="r l3"><i class="s y"></i><svg><use href="#depth"/></svg>深度轮廓铣_COPY</span></td><td></td><td><svg class="k"><use href="#ok"/></svg></td><td>E40R0.8</td></tr>
      <tr><td><span class="r l2"><i class="e">−</i><i class="s y"></i><svg><use href="#fold"/></svg>A03</span></td><td></td><td></td><td></td></tr>
      <tr class="op"><td><span class="r l3"><i class="s y"></i><svg><use href="#depth"/></svg>深度轮廓铣_COP...</span></td><td><svg class="m dk"><use href="#mag"/></svg></td><td><svg class="k"><use href="#ok"/></svg></td><td>E16R0.8</td></tr>
      <tr><td><span class="r l2"><i class="e">−</i><i class="s"><svg class="k"><use href="#ok"/></svg></i><svg><use href="#fold"/></svg>A04</span></td><td></td><td></td><td></td></tr>
      <tr class="op"><td><span class="r l3"><i class="s"><svg class="k"><use href="#ok"/></svg></i><svg><use href="#depth"/></svg>深度轮廓铣_COP...</span></td><td><svg class="m"><use href="#mag"/></svg></td><td><svg class="k"><use href="#ok"/></svg></td><td>D12</td></tr>
      <tr class="op"><td><span class="r l3"><i class="s"><svg class="k"><use href="#ok"/></svg></i><svg><use href="#depth"/></svg>深度轮廓铣_COP...</span></td><td></td><td><svg class="k"><use href="#ok"/></svg></td><td>D12</td></tr>
      <tr><td><span class="r l2"><i class="e">−</i><i class="s y"></i><svg class="pale"><use href="#fold"/></svg>A05</span></td><td></td><td></td><td></td></tr>
      <tr class="op lo"><td><span class="r l3"><i class="s y"></i><svg><use href="#mill"/></svg>轮廓铣倒角</span></td><td><svg class="m dk"><use href="#mag"/></svg></td><td><svg class="k"><use href="#ok"/></svg></td><td>DJ10</td></tr>
      <tr class="op lo"><td><span class="r l3"><i class="s y"></i><svg><use href="#mill"/></svg>轮廓铣倒角_COPY</span></td><td></td><td><svg class="k"><use href="#ok"/></svg></td><td>DJ10</td></tr>
      <tr class="lo dim"><td><span class="r l2"><i class="e"></i><i class="s"><svg class="k"><use href="#ok"/></svg></i><svg class="pale"><use href="#fold"/></svg>A06</span></td><td></td><td></td><td></td></tr>
      <tr><td><span class="r l2"><i class="e">−</i><i class="s y"></i><svg><use href="#fold"/></svg>A07</span></td><td></td><td></td><td></td></tr>
      <tr class="op lo"><td><span class="r l3"><i class="s y"></i><svg><use href="#depth"/></svg>深度轮廓铣_COP...</span></td><td><svg class="m"><use href="#mag"/></svg></td><td><svg class="k"><use href="#ok"/></svg></td><td>E40R0.8</td></tr>
      <tr class="op lo"><td><span class="r l3"><i class="s y"></i><svg><use href="#depth"/></svg>深度轮廓铣_COP...</span></td><td></td><td><svg class="k"><use href="#ok"/></svg></td><td>E40R0.8</td></tr>
      <tr class="lo dim"><td><span class="r l2"><i class="e">−</i><i class="s"><svg class="k"><use href="#ok"/></svg></i><svg><use href="#fold"/></svg>A08</span></td><td></td><td></td><td></td></tr>
      <tr class="op lo"><td><span class="r l3"><i class="s"><svg class="k"><use href="#ok"/></svg></i><svg><use href="#depth"/></svg>深度轮廓铣_COP...</span></td><td><svg class="m"><use href="#mag"/></svg></td><td><svg class="k"><use href="#ok"/></svg></td><td>D12</td></tr>
      <tr class="op lo"><td><span class="r l3"><i class="s"><svg class="k"><use href="#ok"/></svg></i><svg><use href="#depth"/></svg>深度轮廓铣_COP...</span></td><td></td><td><svg class="k"><use href="#ok"/></svg></td><td>D12</td></tr>
      <tr class="faded"><td><span class="r l2"><i class="e">−</i><i class="s y"></i><svg class="pale"><use href="#fold"/></svg>A09</span></td><td></td><td></td><td></td></tr>
      <tr class="op lo"><td><span class="r l3"><i class="s y"></i><svg><use href="#mill"/></svg>轮廓铣倒角_COP...</span></td><td><svg class="m"><use href="#mag"/></svg></td><td><svg class="k"><use href="#ok"/></svg></td><td>DJ10</td></tr>
      <tr class="lo faded"><td><span class="r l2"><i class="e"></i><i class="s"><svg class="k"><use href="#ok"/></svg></i><svg class="pale"><use href="#fold"/></svg>A10</span></td><td></td><td></td><td></td></tr>
      <tr class="lo faded"><td><span class="r l2"><i class="e"></i><i class="s"><svg class="k"><use href="#ok"/></svg></i><svg><use href="#fold"/></svg>A11</span></td><td></td><td></td><td></td></tr>
      <tr class="faded"><td><span class="r l2"><i class="e"></i><i class="s y"></i><svg><use href="#fold"/></svg>A12</span></td><td></td><td></td><td></td></tr>
      <tr class="lo faded"><td><span class="r l2"><i class="e"></i><i class="s"><svg class="k"><use href="#ok"/></svg></i><svg><use href="#fold"/></svg>A13</span></td><td></td><td></td><td></td></tr>
      <tr class="lo faded"><td><span class="r l2"><i class="e"></i><i class="s"><svg class="k"><use href="#ok"/></svg></i><svg><use href="#fold"/></svg>A14</span></td><td></td><td></td><td></td></tr>
      <tr class="faded"><td><span class="r l2"><i class="e"></i><i class="s y"></i><svg><use href="#fold"/></svg>A15</span></td><td></td><td></td><td></td></tr>
      <tr class="lo faded"><td><span class="r l2"><i class="e"></i><i class="s"><svg class="k"><use href="#ok"/></svg></i><svg><use href="#fold"/></svg>A16</span></td><td></td><td></td><td></td></tr>
      <tr class="lo faded"><td><span class="r l2"><i class="e"></i><i class="s"><svg class="k"><use href="#ok"/></svg></i><svg><use href="#fold"/></svg>A17</span></td><td></td><td></td><td></td></tr>
      <tr class="lo faded"><td><span class="r l2"><i class="e"></i><i class="s"><svg class="k"><use href="#ok"/></svg></i><svg class="pale"><use href="#fold"/></svg>A18</span></td><td></td><td></td><td></td></tr>
      <tr><td><span class="r l2"><i class="e"></i><i class="s"><svg class="k"><use href="#ok"/></svg></i><svg class="pale"><use href="#fold"/></svg>A19</span></td><td></td><td></td><td></td></tr>
      <tr><td><span class="r l2"><i class="e"></i><i class="s"><svg class="k"><use href="#ok"/></svg></i><svg><use href="#fold"/></svg>A20</span></td><td></td><td></td><td></td></tr>
      </tbody>
    </table>
    <span class="vbar"></span>
    </div>
    <div class="hbar"></div>
    <div class="peek"><span>相关性</span></div>
    <button class="fold">相关性</button>
    <button class="fold">细节</button>
  </section>

  <aside class="res">
    <button aria-label="设置"><svg viewBox="0 0 16 16"><circle cx="8" cy="8" r="3.500" stroke="#333" stroke-width="1.300"/><path d="M8 2v2M8 12v2M2 8h2M12 8h2M4 4l1 1M11 11l1 1M12 4l-1 1M4 12l1-1" stroke="#333" stroke-width="1.500"/></svg></button>
    <button aria-label="装配导航器"><svg viewBox="0 0 16 16"><path d="M5 3l4-2 5 2v6l-4 2-2 4-5-2V7l2-1z" fill="#ddd" stroke="#555"/><path d="M5 3l5 2 4-2M10 5v6M3 7l5 2v5" stroke="#555"/></svg></button>
    <button aria-label="约束导航器"><svg viewBox="0 0 16 16"><path d="M1 4l5-3 5 2v6l-5 3-5-3z" fill="#ed812d" stroke="#8b542c"/><path d="M1 13h6V9M8 7l7 8V7l-7 8z" fill="#eee" stroke="#444"/></svg></button>
    <button aria-label="部件导航器"><svg><use href="#bracket"/></svg></button>
    <button class="sel" aria-label="工序导航器"><svg viewBox="0 0 16 16"><path d="M2 1v12M2 3h5M2 8h5M8 3h6" stroke="#2e73ad" stroke-width="1.600"/><path d="M6 6l8 7-4 0-2 3z" fill="#fff" stroke="#445"/></svg></button>
    <button aria-label="机床导航器"><svg viewBox="0 0 16 16"><path d="M1 5h14M2 5v9h4V5M8 5v9h6M8 9h6" fill="#ccc" stroke="#555" stroke-width="1.300"/><path d="M4 2h9v4" stroke="#db6a3b" stroke-width="2"/></svg></button>
    <button aria-label="加工特征"><svg viewBox="0 0 16 16"><use href="#bracket"/><path d="M13 1l-2 4h4l-3 4" stroke="#eb8a3f"/></svg></button>
    <button aria-label="重用库"><svg viewBox="0 0 16 16"><path d="M1 8l5-5 5 3-5 6z" fill="#eda258" stroke="#555"/><path d="M5 8l6-2 4 5-6 3z" fill="#fff" stroke="#444"/></svg></button>
    <button aria-label="分析"><svg viewBox="0 0 16 16"><path d="M2 2v5M2 11v3M6 4v4M12 2v4M13 9v5M9 9v4" stroke="#3540a5" stroke-width="2.500"/><path d="M3 9h4M9 4h2" stroke="#bb58a8" stroke-width="2"/></svg></button>
    <button aria-label="着色"><svg viewBox="0 0 16 16"><path d="M1 2v11M5 4v8M9 5v6M1 3l13 3M1 7l12 1" stroke="#d14b45"/><path d="M6 9l8-3v7l-6 2z" fill="#ed963c"/><path d="M1 13h11" stroke="#577dd2" stroke-width="2"/></svg></button>
    <button class="apart" aria-label="通知"><svg viewBox="0 0 16 16"><circle cx="7" cy="8" r="6" fill="#777"/><path d="M7 4v8" stroke="#eee"/><path d="M10 2q5 3 4 8" stroke="#bbb"/></svg></button>
    <button class="apart" aria-label="浏览器"><svg viewBox="0 0 16 16"><path d="M1 1h14v14H1zM1 4h14" fill="#b3c8cd" stroke="#444"/><circle cx="8" cy="9" r="4.500" fill="#4b92a8" stroke="#245"/><path d="M4 8q4 3 8 0M8 5v8" stroke="#b5e0e3"/></svg></button>
    <button class="apart" aria-label="历史"><svg viewBox="0 0 16 16"><circle cx="8" cy="8" r="7" fill="#eee" stroke="#444"/><path d="M8 2v6H4M8 14v-1M14 8h-1" stroke="#444"/></svg></button>
    <button aria-label="色谱"><svg viewBox="0 0 16 16"><path d="M1 1h6v4H1z" fill="#ef5a2a"/><path d="M1 4h6v4H1z" fill="#f4e242"/><path d="M1 8h6v3H1z" fill="#43c952"/><path d="M1 11h6v4H1z" fill="#2a6bdf"/><path d="M9 4l5 9" stroke="#222" stroke-width="2"/></svg></button>
    <button aria-label="加工"><svg viewBox="0 0 16 16"><path d="M2 1h4v9l-2 5-2-5zM7 4h3v6H7z" fill="#6a8fc6"/><path d="M8 7h7l-4 3 4 5" stroke="#333" stroke-width="1.300"/></svg></button>
    <button aria-label="工具"><svg viewBox="0 0 16 16"><path d="M1 1h14v14H1z" fill="#eee" stroke="#555"/><path d="M3 4l9 9M13 4l-9 9M3 6l3-2M10 3l3 3" stroke="#444" stroke-width="1.400"/></svg></button>
    <button aria-label="机器"><svg viewBox="0 0 16 16"><path d="M1 5h11v9H1zM4 5v9M8 5v9" fill="#999" stroke="#444"/><circle cx="12" cy="4" r="3" fill="#e1df7d"/><path d="M10 10h5v4h-5" stroke="#333"/></svg></button>
  </aside>
</main>

<footer>
  <div class="bbar"><div class="run">
    <button aria-label="测量"><svg viewBox="0 0 16 16"><path d="M1 13L12 1l3 2L4 15z" fill="#eee" stroke="#555"/></svg></button>
    <button aria-label="日程"><svg viewBox="0 0 16 16"><use href="#calc"/><path d="M7 14l6-6 2 2-6 6z" fill="#fff" stroke="#555"/></svg></button>
    <button aria-label="称重"><svg viewBox="0 0 16 16"><use href="#calc"/><path d="M7 11q4-4 8 0v4H7z" fill="#ccc" stroke="#555"/></svg></button>
    <button aria-label="拔模"><svg viewBox="0 0 16 16"><path d="M1 7l6-6 7 2v8l-7 3-4-2z" fill="#f39425" stroke="#b76a20"/><path d="M7 8h8v7H7zM9 13l3-4 2 4z" fill="#fff" stroke="#444"/></svg></button>
    <button aria-label="点信息"><svg viewBox="0 0 16 16"><path d="M3 1v6M0 4h6" stroke="#45a2bd"/><circle cx="11" cy="11" r="4" stroke="#555"/><path d="M11 9v1M11 11v3" stroke="#555"/></svg></button>
    <button aria-label="截面"><svg viewBox="0 0 16 16"><path d="M2 5l4-4 8 1v6H2z" fill="#f08e2c"/><path d="M4 6h11v9H4zM1 11h9M8 8l3 4M6 13h6" stroke="#444" fill="#fff"/></svg></button>
    <button aria-label="定位"><svg viewBox="0 0 16 16"><path d="M2 1v8l5-3" stroke="#6a917a"/><path d="M5 8l5-3 5 2v5l-5 3-5-3z" fill="#999" stroke="#444"/><path d="M5 8l5 2 5-3" stroke="#eee"/></svg></button>
    <button aria-label="动态坐标"><svg viewBox="0 0 16 16"><use href="#axis"/><use href="#cross"/></svg></button>
    <button aria-label="坐标原点"><svg viewBox="0 0 16 16"><path d="M3 2v9" stroke="#7a9c75"/><path d="M3 10l10-6M3 10l10 4" stroke="#cf6b64"/></svg></button>
    <button aria-label="坐标方向"><svg viewBox="0 0 16 16"><path d="M8 8V1M8 8l-7 5M8 8l7 5M3 12h10M8 5l4 4" stroke="#bd5d74"/><circle cx="8" cy="8" r="1.500" fill="#b33"/></svg></button>
    <button aria-label="保存坐标"><svg viewBox="0 0 16 16"><use href="#axis"/><path d="M6 6h9v9H6zM8 6v3h4V6M8 15v-3h5v3" stroke="#555"/></svg></button>
    <button aria-label="坐标显示"><svg viewBox="0 0 16 16"><path d="M2 3v11l7-4" stroke="#6a917a"/><path d="M4 1v4h2V2v3h2V1M10 4V1h2v3M14 1v4M4 6h11" stroke="#555"/></svg></button>
    <button aria-label="移动至图层"><svg viewBox="0 0 16 16"><use href="#layers"/><path d="M8 7h6v8H8z" fill="#fff" stroke="#333"/></svg></button>
    <button aria-label="图层设置"><svg viewBox="0 0 16 16"><use href="#layers"/><path d="M7 7h8v8H7zM9 11l2 2 3-5" fill="#fff" stroke="#333"/></svg></button>
    <button aria-label="图层可见"><svg viewBox="0 0 16 16"><use href="#layers"/><circle cx="11" cy="11" r="3.500" fill="#fff" stroke="#333" stroke-width="1.400"/><circle cx="11" cy="11" r="1" fill="#333"/></svg></button>
    <button aria-label="球"><svg viewBox="0 0 16 16"><ellipse cx="8" cy="8" rx="7" ry="6" fill="#f4c497" stroke="#876"/><path d="M1 8h14M3 4q5 3 10 0M8 2v12M4 3q-2 5 0 10M12 3q2 5 0 10" stroke="#8a7464"/></svg></button>
    <button aria-label="正方形"><svg viewBox="0 0 16 16"><path d="M1 1h14v14H1z" fill="#fff" stroke="#555"/><path d="M5 5h6v6H5z" fill="#ef8c33"/></svg></button>
    <button aria-label="复制面"><svg viewBox="0 0 16 16"><use href="#ocube"/><path d="M9 7h5v7H9z" fill="#fff" stroke="#444"/></svg></button>
    <button aria-label="偏置面"><svg><use href="#plate"/></svg></button>
    <button aria-label="替换面"><svg viewBox="0 0 16 16"><path d="M1 7l5-4 8 6-5 5z" fill="#ccc" stroke="#666"/><path d="M5 8l5-4 5 5-5 4z" fill="#ef9337"/></svg></button>
    <button aria-label="移动面"><svg viewBox="0 0 16 16"><path d="M1 1h11v11H1z" fill="#ed9025" stroke="#b47123"/><use href="#cross"/></svg></button>
    <button aria-label="方向"><svg viewBox="0 0 16 16"><path d="M8 1v6M8 9l-6 4M8 9l7 4M6 3l2-2 2 2" stroke="#5179a7"/><path d="M5 8l3-2 4 2v4l-4 2-3-2z" fill="#6a98d0"/></svg></button>
    <button aria-label="折弯"><svg viewBox="0 0 16 16"><path d="M1 2l7 5 7-5v8l-7 5-7-5z" fill="#ccc8bd" stroke="#666"/><path d="M8 7v8" stroke="#666"/></svg></button>
    <button aria-label="镜像"><svg viewBox="0 0 16 16"><path d="M7 2v12H2z" fill="#28417d"/><path d="M9 2v12h5z" fill="#c02e40"/></svg></button>
    <button aria-label="关联"><svg viewBox="0 0 16 16"><circle cx="8" cy="8" r="3.500" fill="#cdd8ee" stroke="#527"/><path d="M1 12l4 3M11 1l4 3M3 14l3-3M10 6l3-3" stroke="#8a96c5" stroke-width="1.400"/></svg></button>
    <button aria-label="移动体"><svg viewBox="0 0 16 16"><use href="#ocube"/><use href="#cross"/></svg></button>
    <button aria-label="删除体"><svg viewBox="0 0 16 16"><use href="#ocube"/><path d="M8 8l6 6M14 8l-6 6" stroke="#333" stroke-width="1.500"/></svg></button>
    <button aria-label="弯曲面"><svg viewBox="0 0 16 16"><path d="M1 14Q4 4 8 2l7 2q-5 4-6 10z" fill="#eba25d" stroke="#6b5340"/></svg></button>
    <button aria-label="体"><svg viewBox="0 0 16 16"><use href="#ocube"/><path d="M1 6l7 3v5l-7-3z" fill="#a2c6ca"/></svg></button>
    <button aria-label="体颜色"><svg viewBox="0 0 16 16"><use href="#ocube"/><path d="M8 8h3v7H8z" fill="#d55"/><path d="M11 9h3v6h-3z" fill="#4aa56c"/></svg></button>
    <button aria-label="条纹"><svg viewBox="0 0 16 16"><path d="M1 8l8-6 6 4-9 8z" fill="#e03a2c"/><path d="M3 9l8-7M4 12l10-7" stroke="#f5df4a" stroke-width="1.800"/><path d="M1 9l5 4 9-7v2l-9 7-5-4z" fill="#544a2c"/></svg></button>
    <button aria-label="坐标体"><svg viewBox="0 0 16 16"><path d="M2 1v13h13" stroke="#c7a734" stroke-width="2"/><path d="M4 5l5-3 5 2v5l-5 3-5-3z" fill="#52a080" stroke="#333"/><path d="M9 7l5-3v5l-5 3z" fill="#5263b5"/></svg></button>
    <button aria-label="包容体"><svg viewBox="0 0 16 16"><path d="M1 7l6-3 7 2v6l-6 3-7-3z" fill="#d8b6ef" stroke="#8b4dbb"/><path d="M1 7l7 2 6-3M8 9v6M10 5l4-4M12 6l3-2" stroke="#8b4dbb"/></svg></button>
    <button aria-label="重量"><svg viewBox="0 0 16 16"><path d="M1 1h14v14H1z" fill="#d8e6f0" stroke="#889"/><path d="M8 9h5l2 5H6z" fill="#333"/><path d="M3 3v5M3 6l3-3M4 6l2 2M10 3h-2v3h2zM10 3v5H8" stroke="#c33"/></svg></button>
  </div><div class="tail">
    <input type="checkbox" aria-label="启用"><button aria-label="圆柱体"><svg viewBox="0 0 16 16"><path d="M0 0h16v16H0z" fill="#999"/><path d="M2 5v5q6 5 12 0V5z" fill="#444"/><ellipse cx="8" cy="5" rx="6" ry="2" fill="#ddd"/><path d="M3 9q5 3 10 0" stroke="#eee" stroke-width="2"/></svg></button><button aria-label="盒"><svg viewBox="0 0 16 16"><path d="M2 4h10v11H3zM2 4l3-3h10v3l-3 2" stroke="#555" fill="#eee"/><circle cx="7.500" cy="10" r="3" stroke="#555"/></svg></button><i class="dd end"></i>
  </div></div>
  <div class="status">在工序导航器中编辑对象，或者是使用“插入”新建对象</div>
  <div class="brand"><svg viewBox="0 0 40 42"><circle cx="19" cy="20" r="14" stroke="#444" stroke-width="2.500"/><circle cx="19" cy="20" r="17" stroke="#444" stroke-width="4" stroke-dasharray="4 4.900"/><path d="M3 35h27v5H3z" fill="#777"/><circle cx="19" cy="20" r="8" stroke="#555" stroke-width="2.500"/><path d="M4 36L25 14Q23 7 31 4l-1 5 4 3 4-3q1 8-8 9L9 39q-4 1-5-3z" fill="#fff" stroke="#444" stroke-width="1.500"/></svg><div><b>机械资源网</b><small>www.u557.com</small></div></div>
</footer>
</body>
</html>
```
FILE: styles.css
```css
* { box-sizing: border-box; }
html, body { margin: 0; height: 100%; }
body {
  display: flex; flex-direction: column; min-height: 100vh;
  border: solid #04658b; border-width: 0 3px 4px 2px;
  background: #fff; color: #333;
  font: 8px/10px "Noto Sans", "Noto Sans CJK SC", sans-serif;
}
svg { fill: none; display: block; flex: none; }
.defs { position: absolute; width: 0; height: 0; }
button { font: inherit; color: inherit; background: none; border: 0; padding: 0; margin: 0; display: flex; align-items: center; justify-content: center; flex: none; }
button svg { width: 16px; height: 16px; }
a { color: inherit; text-decoration: none; }
i, em { font-style: normal; }
.dd { flex: none; width: 0; height: 0; border: 2px solid transparent; border-top-color: #333; border-bottom: 0; }

/* title bar and menu */
.top { background: #02719a; color: #e6f4f8; border-top: 2px solid #06506f; margin: 0 -3px 0 -2px; }
.title { display: flex; align-items: center; height: 20px; padding: 0 8px 0 4px; gap: 6px; }
.title button svg { width: 12px; height: 12px; }
.title .dd { border-top-color: #e6f4f8; margin-left: -2px; }
.title .dd.wide { border-width: 3px 3px 0; margin-left: 0; }
.nx { font: 700 14px/20px "Noto Sans", sans-serif; color: #fff; }
.ghost svg { width: 58px; height: 12px; }
.title .win { gap: 0; font-size: 7px; margin-left: -3px; }
.title h1 { flex: 1; margin: 0; padding-right: 4px; text-align: center; font: inherit; }
.siemens { font: 900 8px/10px "Noto Sans", sans-serif; color: #fff; margin-right: 8px; }
.wctl { display: flex; gap: 5px; }
.title .wctl svg { width: 9px; height: 9px; }
.menu { display: flex; align-items: center; height: 18px; padding: 0 6px 0 0; }
.menu a { padding: 0 10px; line-height: 18px; flex: none; }
.menu .file { padding: 0 16px 0 14px; }
.menu .on { color: #e4de7e; box-shadow: inset 0 -2px #c9cf84; }
.find { display: flex; align-items: center; background: #fff; width: 79px; height: 12px; margin-left: auto; }
.find input { flex: 1; min-width: 0; border: 0; padding: 0 1px; background: none; font: 7px/10px "Noto Sans CJK SC", sans-serif; }
.find input::placeholder { color: #aaa; opacity: 1; }
.find svg { width: 11px; height: 11px; margin-right: 1px; }
.mctl { display: flex; gap: 5px; margin-left: 6px; }
.mctl svg { width: 11px; height: 11px; }

/* ribbon */
.ribbon { display: flex; height: 58px; border-bottom: 1px solid #dcdcdc; background: #fdfdfd; font-size: 7px; flex: none; }
.grp { display: flex; flex-direction: column; border-right: 1px solid #e2e2e2; min-width: 0; padding-top: 2px; }
.g1 { flex: 135; } .g2 { flex: 35; } .g3 { flex: 113; } .g4 { flex: 158; } .g5 { flex: 61; } .g6 { flex: 334; } .g7 { flex: 59; }
.body { display: flex; flex: 1; align-items: flex-start; padding: 0 6px; gap: 6px; min-width: 0; }
.g1 .body { padding: 0 6px 0 7px; }
.g7 .body, .g2 .body { padding-left: 3px; padding-right: 2px; }
.g2 .body { justify-content: center; }
.cap { position: relative; text-align: center; color: #3c7f90; line-height: 12px; height: 14px; }
.cap .dd { position: absolute; right: 4px; top: 5px; }
.big { flex-direction: column; line-height: 10px; min-width: 28px; white-space: nowrap; }
.big svg { width: 21px; height: 21px; margin-bottom: 2px; }
.big .dd { margin-top: 2px; }
.off, .off button { color: #c4c4c4; }
.off svg { opacity: .6; }
.off .dd { border-top-color: #666; }
.pair { display: flex; flex-direction: column; gap: 6px; padding-top: 1px; margin-left: -1px; }
.g3 .body { gap: 5px; padding-right: 6px; justify-content: space-between; }
.list { display: flex; flex-direction: column; gap: 2px; }
.list button { justify-content: flex-start; gap: 2px; height: 12px; white-space: nowrap; }
.list svg { width: 11px; height: 11px; }
.play { display: grid; grid-template-columns: 16px 4px 16px 4px; column-gap: 5px; row-gap: 5px; align-items: center; padding: 1px 0 0 1px; }
.g4 .body { gap: 4px; }
.speed { flex: 1; text-align: center; min-width: 0; padding-top: 5px; }
.speed span { display: block; padding-top: 3px; }
.speed input { appearance: none; display: block; width: 100%; height: 10px; margin: 0; background: linear-gradient(#aaa, #aaa) center / 100% 2px no-repeat; }
.speed input::-webkit-slider-thumb { appearance: none; width: 5px; height: 10px; background: #0c648c; }
.g5 .tools { flex-direction: column; gap: 6px; padding: 3px 2px 0 4px; }
.tools div { display: flex; gap: 3px; }
.tools div:first-child { gap: 5px; }
.tools svg { width: 11px; height: 11px; }
.g6 .body { gap: 5px; }
.g6 .list { margin-left: 2px; }
.g6 .cap { padding-right: 14px; }

/* selection bar */
.selbar { display: flex; align-items: center; height: 30px; flex: none; padding: 0 3px 0 8px; gap: 4px; border-bottom: 1px solid #c6ced4; font-size: 7px; background: #fff; }
.selbar hr { width: 1px; height: 22px; margin: 0 1px; border: 0; background: #ddd; flex: none; }
.selbar .dd { margin: 0 2px 0 -2px; }
.selbar .dd.end { margin: 14px 0 0 auto; }
.mn { gap: 4px; }
.mn svg { width: 10px; height: 10px; }
.mn .dd { margin: 0; }
.sel { background: #cfe6f1; }
.selbar .sel { height: 20px; padding: 0 2px; margin: 0 -2px; }
.selbar .lone { margin-left: 2px; }
.selbar select {
  appearance: none; height: 14px; border: 1px solid #999; border-radius: 0; color: #333;
  font: 7px/10px "Noto Sans CJK SC", sans-serif; padding: 0 3px;
  background:
    linear-gradient(to bottom left, #333 50%, transparent 50%) calc(100% - 6px) 5px / 2px 3px no-repeat,
    linear-gradient(to bottom right, #333 50%, transparent 50%) calc(100% - 4px) 5px / 2px 3px no-repeat,
    #fff;
}
.s1 { flex: 0 1 92px; } .s2 { flex: 0 1 97px; } .s3 { flex: 0 1 31px; }
.txt { white-space: nowrap; margin-right: 2px; }
.stack { display: flex; flex-direction: column; gap: 4px; }
.stack svg { width: 11px; height: 11px; }
.stack .dd { margin: 4px 0; }

/* work area */
.work { display: flex; flex: 1; min-height: 0; }
.tools-left { width: 31px; flex: none; display: flex; flex-direction: column; align-items: center; gap: 4px; padding-top: 5px; overflow: hidden; }
.serif { font: 20px/16px "Liberation Serif", serif; color: #d18a3e; height: 16px; }
.mini { display: grid; grid-template-columns: 11px 11px; gap: 4px 3px; padding-bottom: 3px; border-bottom: 1px dotted #bbb; }
.mini svg { width: 11px; height: 11px; }
.back { align-self: flex-start; margin: auto 0 3px 4px; border: 2px solid transparent; border-right-color: #333; border-left: 0; }
.view { flex: 1; min-width: 0; display: flex; flex-direction: column; }
.tabs { border-bottom: 2px solid #055f85; height: 15px; flex: none; display: flex; }
.doc { background: #055f85; color: #eef7fb; height: 15px; padding: 0 2px; gap: 1px; }
.doc svg { width: 9px; height: 9px; }
.doc svg:first-child { width: 11px; height: 11px; }
.scene { flex: 1; width: 100%; min-height: 0; }
.scene text { font: 8px "Noto Sans", sans-serif; }
.dots { stroke: #46565f; stroke-linecap: round; }
.tools-right { width: 23px; flex: none; display: flex; flex-direction: column; align-items: center; gap: 4px; padding-top: 5px; border-right: 1px solid #d0d6da; overflow: hidden; }
.tools-right .sel { outline: 2px solid #cfe6f1; }
.dot { width: 2px; height: 2px; background: #a33; margin: auto 0 4px; }

/* operation navigator */
.nav { width: 228px; flex: none; padding: 0 3px 3px 6px; display: flex; flex-direction: column; background: #fdfdfd; }
.nav header { display: flex; align-items: center; gap: 7px; height: 18px; flex: none; color: #555; }
.nav header svg { width: 9px; height: 9px; }
.tree { position: relative; flex: 1; min-height: 0; border-top: 1px solid #ddd; }
table { width: 100%; height: 100%; border-collapse: collapse; table-layout: fixed; }
.cn { width: 125px; } .ct { width: 24px; } .cp { width: 28px; }
th, td { padding: 0 0 0 3px; font-weight: 400; text-align: left; line-height: 10px; white-space: nowrap; }
th { background: #f0f0f0; color: #444; border-bottom: 1px solid #ddd; }
th em, .lt { color: #aaa; }
tbody tr:nth-child(even) { background: #f8f8f8; }
td:first-child { border-right: 1px solid #555; }
td + td { border-right: 1px solid #f0f0f0; }
.r { display: flex; align-items: center; height: 10px; color: #444; }
.r > svg, .s svg { width: 10px; height: 10px; }
.r > svg { margin-right: 1px; }
.e { width: 10px; flex: none; color: #777; line-height: 8px; }
.s { width: 11px; height: 11px; flex: none; }
.y { background: linear-gradient(#e5d47c, #e5d47c) 6px 0 / 1px 100% no-repeat; }
.l2 { padding-left: 12px; }
.l3 { padding-left: 34px; }
.op .r { color: #b4b8b8; }
.op td { color: #cdcdcd; }
.dim .r { color: #777; }
.faded .r { color: #a5a5a5; }
.k { width: 9px; height: 9px; color: #35bd5b; }
.lo .k { color: #97d8a5; }
.m { width: 6px; height: 10px; color: #aaa; margin-left: 2px; }
.dk { color: #444; }
.pale { opacity: .5; }
.cur { outline: 1px solid #c2c2c2; outline-offset: -1px; }
.vbar { position: absolute; right: 4px; top: 5%; width: 1px; height: 17%; background: #777; }
.hbar { height: 2px; width: 72px; margin: 4px 0 0 12px; background: #999; flex: none; }
.peek { height: 7px; overflow: hidden; border-bottom: 2px solid #ccc; color: #91b3bb; padding-left: 15px; line-height: 8px; flex: none; }
.peek span { display: block; margin-top: -3px; }
.fold { justify-content: flex-start; height: 15px; border-bottom: 1px solid #ccc; color: #528796; gap: 6px; padding-left: 6px; }
.fold::before { content: ""; border: 2px solid transparent; border-left: 3px solid #367080; border-right: 0; }

/* resource bar */
.res { width: 20px; flex: none; background: #d5d7d8; display: flex; flex-direction: column; align-items: center; gap: 8px; overflow: hidden; }
.res button { width: 20px; height: 18px; }
.res button:first-child { margin-bottom: 4px; }
.res .sel { outline: 4px solid #cfe6f1; }
.res .apart { margin-top: 7px; }

/* bottom bars */
footer { position: relative; flex: none; background: #fdfdfd; }
.bbar { display: flex; height: 23px; border-bottom: 1px solid #ccc; }
.run { flex: 696; display: flex; justify-content: space-between; align-items: center; padding-left: 5px; min-width: 0; }
.tail { flex: 192; display: flex; align-items: center; gap: 4px; padding: 0 4px 0 6px; }
.tail input { appearance: none; width: 8px; height: 8px; border: 1px solid #666; background: #fff; margin: 0; }
.tail .end { margin: 6px 0 0 auto; }
.status { height: 13px; line-height: 12px; font-size: 7px; color: #222; padding-left: 2px; background: #fff; }
.brand { position: absolute; right: 30px; bottom: 18px; display: flex; align-items: center; gap: 1px; }
.brand svg { width: 40px; height: 42px; }
.brand b { display: block; font-size: 14px; line-height: 18px; color: #111; }
.brand small { display: block; font: 700 10px/10px "Liberation Sans", sans-serif; color: #888; }
```
